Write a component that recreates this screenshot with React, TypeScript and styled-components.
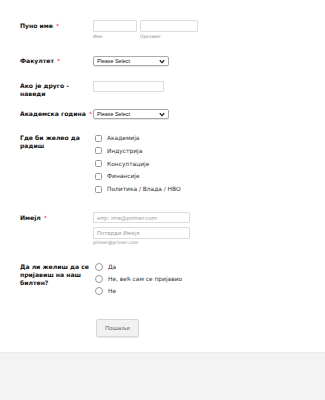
import React from "react";
import styled, { createGlobalStyle } from "styled-components";

const Global = createGlobalStyle`
  html, body { margin: 0; padding: 0; background: #fff; }
  body { font-family: "DejaVu Sans", Verdana, sans-serif; }
  * { box-sizing: border-box; }
`;

const Page = styled.div`
  width: 325px;
  height: 400px;
  display: flex;
  flex-direction: column;
  overflow: hidden;
`;

const Form = styled.form`
  height: 352px;
  flex: none;
  padding: 0 0 0 20px;
  display: flex;
  flex-direction: column;
`;

const Footer = styled.div`
  flex: 1;
  background: #f3f3f3;
  border-top: 1px solid #ececec;
`;

const Row = styled.div<{ $top: number }>`
  display: grid;
  grid-template-columns: 73px 1fr;
  margin-top: ${(p) => p.$top}px;
  align-items: start;
`;

const Label = styled.div<{ $pt?: number }>`
  font-size: 6.1px;
  font-weight: bold;
  color: #111;
  line-height: 8px;
  padding-top: ${(p) => p.$pt ?? 0}px;
`;

const Req = styled.span`
  color: #f23a3c;
  font-weight: normal;
  margin-left: 3px;
`;

const Field = styled.div`
  display: flex;
  flex-direction: column;
`;

const Inline = styled.div`
  display: flex;
  gap: 3px;
`;

const Col = styled.div`
  display: flex;
  flex-direction: column;
`;

const TextInput = styled.input<{ $w: number; $h?: number; $mt?: number }>`
  width: ${(p) => p.$w}px;
  height: ${(p) => p.$h ?? 12}px;
  margin: ${(p) => p.$mt ?? 0}px 0 0 0;
  border: 1px solid #dcdcdc;
  border-radius: 1px;
  background: #fff;
  padding: 0 3px;
  font-family: "DejaVu Sans", Verdana, sans-serif;
  font-size: 5.4px;
  color: #333;
  outline: none;
  &::placeholder { color: #9a9a9a; }
`;

const Sub = styled.div<{ $mt?: number }>`
  font-size: 4.5px;
  color: #8c8c8c;
  margin-top: ${(p) => p.$mt ?? 2}px;
  line-height: 6px;
`;

const SelectBox = styled.div<{ $w: number }>`
  width: ${(p) => p.$w}px;
  height: 10px;
  border: 1px solid #a9a9a9;
  border-radius: 2px;
  background: #fff;
  display: flex;
  align-items: center;
  justify-content: space-between;
  padding: 0 3px 0 3px;
  font-family: "Liberation Sans", Arial, sans-serif;
  font-size: 5.4px;
  color: #111;
  box-shadow: 0 1px 0 #e6e6e6;
`;

const OptionList = styled.div<{ $gap: number }>`
  display: flex;
  flex-direction: column;
  gap: ${(p) => p.$gap}px;
  padding-left: 2px;
`;

const Option = styled.label`
  display: flex;
  align-items: center;
  gap: 5px;
  font-size: 5.9px;
  color: #333;
  line-height: 8px;
`;

const Check = styled.span`
  width: 7px;
  height: 7px;
  border: 1px solid #9a9a9a;
  border-radius: 1.5px;
  background: #fff;
  flex: none;
`;

const Radio = styled.span`
  width: 8px;
  height: 8px;
  border: 1px solid #9a9a9a;
  border-radius: 50%;
  background: #fff;
  flex: none;
`;

const ButtonRow = styled.div`
  padding-left: 76px;
  margin-top: 20px;
`;

const Button = styled.button`
  width: 43px;
  height: 18px;
  border: 1px solid #d6d6d6;
  border-radius: 2px;
  background: #f1f1f1;
  box-shadow: 0 1px 1px rgba(0,0,0,0.08);
  font-family: "DejaVu Sans", Verdana, sans-serif;
  font-size: 5.6px;
  color: #666;
  padding: 0;
`;

const Chevron = () => (
  <svg width="6" height="5" viewBox="0 0 6 5">
    <path d="M0.8 1.2 L3 3.6 L5.2 1.2" fill="none" stroke="#222" strokeWidth="1.3" />
  </svg>
);

const interests = ["Академија", "Индустрија", "Консултације", "Финансије", "Политика / Влада / НВО"];
const newsletter = ["Да", "Не, већ сам се пријавио", "Не"];

export default function App() {
  return (
    <Page>
      <Global />
      <Form onSubmit={(e) => e.preventDefault()}>
        <Row $top={20}>
          <Label $pt={2}>Пуно име<Req>*</Req></Label>
          <Inline>
            <Col>
              <TextInput $w={44} />
              <Sub>Име</Sub>
            </Col>
            <Col>
              <TextInput $w={58} />
              <Sub>Презиме</Sub>
            </Col>
          </Inline>
        </Row>

        <Row $top={16}>
          <Label $pt={1}>Факултет<Req>*</Req></Label>
          <Field>
            <SelectBox $w={76}>Please Select<Chevron /></SelectBox>
          </Field>
        </Row>

        <Row $top={15}>
          <Label $pt={1}>Ако је друго - наведи</Label>
          <Field>
            <TextInput $w={71} $h={11} />
          </Field>
        </Row>

        <Row $top={11}>
          <Label $pt={1}>Академска година<Req>*</Req></Label>
          <Field>
            <SelectBox $w={76}>Please Select<Chevron /></SelectBox>
          </Field>
        </Row>

        <Row $top={15}>
          <Label $pt={0}>Где би желео да радиш</Label>
          <OptionList $gap={4.8}>
            {interests.map((t) => (
              <Option key={t}><Check />{t}</Option>
            ))}
          </OptionList>
        </Row>

        <Row $top={19}>
          <Label $pt={2}>Имејл<Req>*</Req></Label>
          <Field>
            <TextInput $w={97} $h={11} placeholder="нпр: ime@primer.com" />
            <TextInput $w={97} $h={12} $mt={4} placeholder="Потврди Имејл" />
            <Sub $mt={1}>primer@primer.com</Sub>
          </Field>
        </Row>

        <Row $top={17}>
          <Label $pt={0}>Да ли желиш да се пријавиш на наш билтен?</Label>
          <OptionList $gap={3.8}>
            {newsletter.map((t) => (
              <Option key={t}><Radio />{t}</Option>
            ))}
          </OptionList>
        </Row>

        <ButtonRow>
          <Button type="submit">Пошаљи</Button>
        </ButtonRow>
      </Form>
      <Footer />
    </Page>
  );
}
